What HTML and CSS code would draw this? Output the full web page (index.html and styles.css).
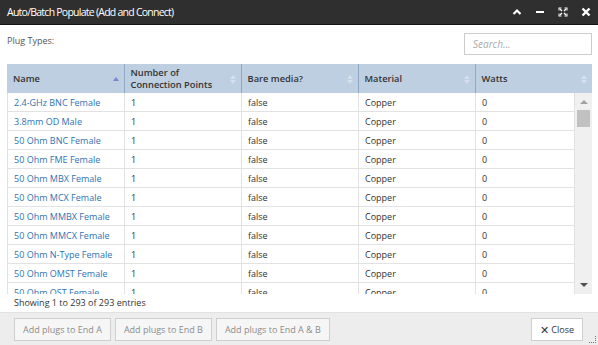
FILE: index.html
```html
<!DOCTYPE html>
<html lang="en">
<head>
  <meta charset="UTF-8">
  <title>Auto/Batch Populate</title>
  <link rel="stylesheet" href="styles.css">
</head>
<body>

<div class="dialog">
  <div class="titlebar">
    <span class="title">Auto/Batch Populate (Add and Connect)</span>
    <div class="title-icons">
      <svg width="10" height="10" viewBox="0 0 10 10"><path d="M1.5 7 L5 3.5 L8.5 7" fill="none" stroke="#fff" stroke-width="2.2"/></svg>
      <svg width="10" height="10" viewBox="0 0 10 10"><rect x="1" y="4" width="8" height="2" fill="#fff"/></svg>
      <svg width="10" height="10" viewBox="0 0 10 10"><path d="M0.5 0.5h3v1h-2v2h-1z M6.5 0.5h3v3h-1v-2h-2z M0.5 6.5h1v2h2v1h-3z M8.5 6.5h1v3h-3v-1h2z" fill="#fff"/><path d="M2 2l2 2M8 2l-2 2M2 8l2-2M8 8l-2-2" stroke="#fff" stroke-width="1.4"/></svg>
      <svg width="10" height="10" viewBox="0 0 10 10"><path d="M1.5 1.5 L8.5 8.5 M8.5 1.5 L1.5 8.5" stroke="#fff" stroke-width="2.4"/></svg>
    </div>
  </div>

  <div class="content">
    <div class="toolbar">
      <span class="label">Plug Types:</span>
      <input type="text" class="search" placeholder="Search...">
    </div>

    <table class="grid grid-head">
      <colgroup>
        <col style="width:117px"><col style="width:117px"><col style="width:117px"><col style="width:117px"><col>
      </colgroup>
      <tr>
        <th class="sorted">Name</th>
        <th>Number of<br>Connection Points</th>
        <th>Bare media?</th>
        <th>Material</th>
        <th>Watts</th>
      </tr>
    </table>

    <div class="body-wrap">
      <div class="rows">
        <table class="grid grid-body" id="rows">
          <colgroup>
            <col style="width:117px"><col style="width:117px"><col style="width:117px"><col style="width:117px"><col>
          </colgroup>
        </table>
      </div>
      <div class="scrollbar">
        <div class="arrow-up"></div>
        <div class="thumb"></div>
        <div class="track"></div>
        <div class="arrow-down"></div>
      </div>
    </div>

    <div class="info">Showing 1 to 293 of 293 entries</div>
  </div>

  <div class="footer">
    <div class="footer-left">
      <button class="btn" disabled>Add plugs to End A</button>
      <button class="btn" disabled>Add plugs to End B</button>
      <button class="btn" disabled>Add plugs to End A &amp; B</button>
    </div>
    <button class="btn btn-close"><span class="x">&#x2715;</span> Close</button>
    <div class="grip"></div>
  </div>
</div>

<script>
  const plugs = [
    '2.4-GHz BNC Female', '3.8mm OD Male', '50 Ohm BNC Female', '50 Ohm FME Female',
    '50 Ohm MBX Female', '50 Ohm MCX Female', '50 Ohm MMBX Female', '50 Ohm MMCX Female',
    '50 Ohm N-Type Female', '50 Ohm OMST Female', '50 Ohm OST Female'
  ];

  const table = document.getElementById('rows');
  plugs.forEach(name => {
    const row = document.createElement('tr');
    row.innerHTML = '<td><a href="#">' + name + '</a></td><td>1</td><td>false</td><td>Copper</td><td>0</td>';
    table.appendChild(row);
  });
</script>

</body>
</html>
```

FILE: styles.css
```css
html, body {
  margin: 0;
  padding: 0;
  height: 100%;
  background-color: #fff;
  font-family: "Open Sans", Arial, sans-serif;
}

.dialog {
  width: 598px;
  height: 345px;
  display: flex;
  flex-direction: column;
  position: relative;
  overflow: hidden;
}

.titlebar {
  height: 24px;
  background-color: #2f2f2f;
  border-bottom: 1px solid #141414;
  display: flex;
  align-items: center;
  justify-content: space-between;
  padding: 0 7px 0 7px;
  color: white;
}

.title {
  font-size: 10.5px;
  letter-spacing: -0.75px;
}

.title-icons {
  display: flex;
  align-items: center;
  gap: 13px;
}

.title-icons svg {
  display: block;
}

.content {
  flex: 1;
  padding: 0 6px 0 7px;
  display: flex;
  flex-direction: column;
}

.toolbar {
  display: flex;
  justify-content: space-between;
  align-items: flex-start;
  margin-top: 8px;
  height: 22px;
}

.label {
  font-size: 9px;
  color: #555;
  line-height: 15px;
}

.search {
  width: 128px;
  height: 22px;
  box-sizing: border-box;
  border: 1px solid #ccc;
  padding: 0 8px;
  font-family: inherit;
  font-size: 10px;
  font-style: italic;
  outline: none;
}

.search::placeholder {
  color: #aaa;
}

.grid {
  border-collapse: collapse;
  table-layout: fixed;
  font-size: 9px;
  color: #333;
}

.grid-head {
  width: 585px;
  margin-top: 9px;
  background-color: #bfcfe2;
  font-size: 9.3px;
}

.grid-head th {
  height: 29px;
  padding: 0 14px 0 6px;
  text-align: left;
  font-weight: 600;
  line-height: 12px;
  border-left: 1px solid #8ea7c6;
  position: relative;
}

.grid-head th:first-child {
  border-left: none;
}

.grid-head th::before,
.grid-head th::after {
  content: "";
  position: absolute;
  right: 5px;
  border-left: 3px solid transparent;
  border-right: 3px solid transparent;
}

.grid-head th::before {
  top: 11px;
  border-bottom: 4px solid #d6e0ec;
}

.grid-head th::after {
  top: 16px;
  border-top: 4px solid #d6e0ec;
}

.grid-head th.sorted::before {
  top: 13px;
  border-bottom-color: #7b86d6;
}

.grid-head th.sorted::after {
  display: none;
}

.body-wrap {
  display: flex;
  height: 201px;
}

.rows {
  width: 568px;
  overflow: hidden;
  border-left: 1px solid #e2e2e2;
  box-sizing: border-box;
}

.grid-body {
  width: 568px;
  margin-left: -1px;
}

.grid-body td {
  height: 18px;
  padding: 0 5px 0 6px;
  border: 1px solid #e2e2e2;
  border-top: none;
  white-space: nowrap;
  overflow: hidden;
}

.grid-body a {
  color: #2f73b4;
  text-decoration: none;
}

.scrollbar {
  width: 17px;
  background-color: #f0f0f0;
  display: flex;
  flex-direction: column;
  align-items: center;
}

.arrow-up,
.arrow-down {
  width: 0;
  height: 0;
  border-left: 4px solid transparent;
  border-right: 4px solid transparent;
}

.arrow-up {
  margin-top: 7px;
  border-bottom: 4px solid #a3a3a3;
}

.arrow-down {
  margin-bottom: 7px;
  border-top: 4px solid #505050;
}

.thumb {
  width: 13px;
  height: 17px;
  margin-top: 6px;
  background-color: #c1c1c1;
}

.track {
  flex: 1;
}

.info {
  font-size: 9px;
  color: #333;
  margin-top: 2px;
  padding-left: 7px;
  line-height: 14px;
}

.footer {
  height: 32px;
  margin-top: auto;
  background-color: #ededed;
  border-top: 1px solid #e2e2e2;
  display: flex;
  align-items: center;
  justify-content: space-between;
  padding: 0 15px 0 14px;
  position: relative;
}

.footer-left {
  display: flex;
  gap: 4px;
}

.btn {
  height: 23px;
  padding: 0 8px;
  border: 1px solid #cfcfcf;
  background-color: #f6f6f6;
  font-family: inherit;
  font-size: 9px;
  color: #8c8c8c;
  cursor: pointer;
}

.btn-close {
  background-color: #fff;
  color: #333;
  padding: 0 8px;
}

.btn-close .x {
  font-size: 11px;
  font-weight: 300;
  vertical-align: -1px;
}

.grip {
  position: absolute;
  right: 2px;
  bottom: 2px;
  width: 6px;
  height: 6px;
  border-right: 1px dotted #777;
  border-bottom: 1px dotted #777;
}
```
